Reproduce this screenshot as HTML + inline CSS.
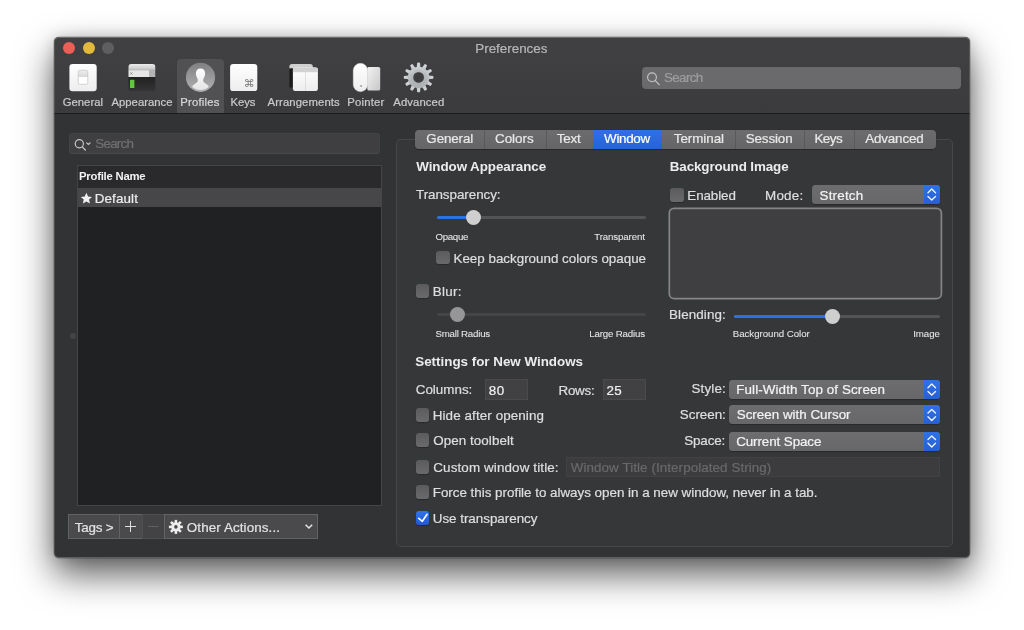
<!DOCTYPE html>
<html lang="en">
<head>
<meta charset="utf-8">
<title>Preferences</title>
<style>
html,body{margin:0;padding:0;background:#fff;}
body{width:1024px;height:630px;position:relative;overflow:hidden;font-family:"Liberation Sans",sans-serif;font-size:13px;}
#g,#txt{position:absolute;left:0;top:0;width:1024px;height:630px;}
#txt,#g svg{will-change:transform;}
.a{position:absolute;}
.x{position:absolute;white-space:nowrap;line-height:1;-webkit-text-stroke:0.22px;}
#w{left:54px;top:37px;width:915.800px;height:520.500px;background:#323335;border-radius:5px;box-shadow:0 0 0 0.5px rgba(0,0,0,.3),0 16px 36px rgba(0,0,0,.65),0 0 14px rgba(0,0,0,.15);}
#tb{left:54px;top:37px;width:915.800px;height:76px;background:linear-gradient(#414144,#3b3b3e);border-radius:5px 5px 0 0;}
.tl{width:12px;height:12px;border-radius:6px;top:42px;}
.cb{width:13.700px;height:13.800px;border-radius:3px;background:linear-gradient(#5b5b5d,#6a6a6c);box-shadow:0 1px 1px rgba(0,0,0,.25);}
.cbon{background:linear-gradient(#3173ea,#2259d2);}
.pop{height:19px;border-radius:3.5px;background:linear-gradient(#6d6d6f,#676769);box-shadow:0 1px 1px rgba(0,0,0,.25);overflow:hidden;}
.pop i{position:absolute;right:0;top:0;width:16px;height:19px;background:linear-gradient(#3071e6,#275fd6);}
.trk{height:3px;border-radius:1.5px;background:#545456;}
.trkd{height:3px;border-radius:1.5px;background:#454547;}
.trkb{height:3px;border-radius:1.5px;background:#2f6fe6;}
.knob{width:15px;height:15px;border-radius:7.5px;background:#cfcfcf;}
.fld{background:#414143;box-sizing:border-box;border:1px solid #4a4a4c;}
.btn{top:514px;height:24.600px;box-sizing:border-box;background:#4a4a4c;border:1px solid #636365;}
.dv{top:130px;width:1px;height:18.5px;background:#59595b;}

</style>
</head>
<body>
<div id="g">
<div id="w" class="a"></div>
<div id="tb" class="a"></div>
<div class="a" style="left:54px;top:113px;width:915.800px;height:1px;background:#1b1b1d;"></div>
<div class="a tl" style="left:63px;background:#ec5f57;"></div>
<div class="a tl" style="left:82.5px;background:#e1b93d;"></div>
<div class="a tl" style="left:102px;background:#5e5e60;"></div>
<div class="a" style="left:177px;top:59px;width:47px;height:54px;background:#515153;border-radius:4px 4px 0 0;"></div>

<!-- toolbar icons -->
<svg class="a" style="left:54px;top:56px;" width="400" height="40" viewBox="54 56 400 40">
<defs>
<linearGradient id="gw" x1="0" y1="0" x2="0" y2="1"><stop offset="0" stop-color="#ffffff"/><stop offset="1" stop-color="#ededed"/></linearGradient>
<linearGradient id="gsw" x1="0" y1="0" x2="0" y2="1"><stop offset="0" stop-color="#f0f0f0"/><stop offset="0.5" stop-color="#d6d6d6"/><stop offset="0.5" stop-color="#ffffff"/><stop offset="1" stop-color="#ffffff"/></linearGradient>
<linearGradient id="gt" x1="0" y1="0" x2="0" y2="1"><stop offset="0" stop-color="#ececec"/><stop offset="1" stop-color="#c4c4c4"/></linearGradient>
<linearGradient id="gd" x1="0" y1="0" x2="0" y2="1"><stop offset="0" stop-color="#222222"/><stop offset="1" stop-color="#343434"/></linearGradient>
<linearGradient id="gp" x1="0" y1="0" x2="0" y2="1"><stop offset="0" stop-color="#808082"/><stop offset="1" stop-color="#b2b2b4"/></linearGradient>
<linearGradient id="gh" x1="0" y1="0" x2="0" y2="1"><stop offset="0" stop-color="#ffffff"/><stop offset="1" stop-color="#e2e2e2"/></linearGradient>
<linearGradient id="gtp" x1="0" y1="0" x2="1" y2="1"><stop offset="0" stop-color="#f4f4f4"/><stop offset="1" stop-color="#c6c6c6"/></linearGradient>
<linearGradient id="gg" x1="0" y1="0" x2="0" y2="1"><stop offset="0" stop-color="#d2d6d8"/><stop offset="1" stop-color="#a4a8aa"/></linearGradient>
<linearGradient id="gg2" gradientUnits="userSpaceOnUse" x1="0" y1="-15" x2="0" y2="15"><stop offset="0" stop-color="#d0d4d6"/><stop offset="1" stop-color="#a6aaac"/></linearGradient>
<clipPath id="cap"><rect x="128.3" y="64" width="27.2" height="27.2" rx="3.2"/></clipPath>
<clipPath id="cpf"><circle cx="200.5" cy="77.3" r="12.700"/></clipPath>
</defs>
<!-- General -->
<rect x="69.4" y="64" width="27.3" height="27.2" rx="3.2" fill="url(#gw)"/>
<rect x="78.2" y="70.3" width="9.6" height="14" rx="1.6" fill="url(#gsw)" stroke="#c2c2c2" stroke-width="0.7"/>
<!-- Appearance -->
<g clip-path="url(#cap)">
<rect x="128.3" y="64" width="27.2" height="6" fill="url(#gt)"/>
<rect x="128.3" y="70" width="20.7" height="7" fill="#e6e6e6"/>
<rect x="149" y="70" width="6.5" height="7" fill="#b4b4b4"/>
<rect x="128.3" y="69.7" width="27.2" height="0.6" fill="#b0b0b0"/>
<path d="M130.3 72.3l2.2 2.4M132.5 72.3l-2.2 2.4" stroke="#777" stroke-width="0.6" fill="none"/>
<rect x="128.3" y="77" width="27.2" height="14.2" fill="url(#gd)"/>
<rect x="130" y="79.8" width="4.4" height="8.2" rx="0.6" fill="#5fc93c"/>
</g>
<!-- Profiles -->
<circle cx="200.5" cy="77.3" r="14.6" fill="url(#gp)"/>
<g clip-path="url(#cpf)">
<path d="M200.500 68.600C203.200 68.600 205.100 70.500 205.100 73.200C205.100 74.500 204.900 75.400 204.600 76.300C204.300 77.300 203.700 78.200 203.400 79.100C203.100 80.100 203.100 81.100 203.500 81.800C204.200 82.900 205.700 83.500 206.900 84.500C208.200 85.500 209.100 86.900 209.500 88.500L209.500 92L191.500 92L191.500 88.500C191.900 86.900 192.800 85.500 194.100 84.500C195.300 83.500 196.800 82.900 197.500 81.800C197.900 81.100 197.900 80.100 197.600 79.100C197.300 78.200 196.700 77.300 196.400 76.300C196.100 75.400 195.900 74.500 195.900 73.200C195.900 70.500 197.800 68.600 200.500 68.600Z" fill="url(#gh)"/>
</g>
<!-- Keys -->
<rect x="230.1" y="64" width="27.2" height="27.1" rx="3.2" fill="url(#gw)"/>
<text x="249.1" y="87.2" font-family="DejaVu Sans, sans-serif" font-size="10.800" fill="#767676" text-anchor="middle">⌘</text>
<!-- Arrangements -->
<path d="M289.4 66.500a2.500 2.500 0 0 1 2.500-2.500h18.400a2.500 2.500 0 0 1 2.500 2.500v2h-23.400z" fill="#cfcfcf"/>
<rect x="289.4" y="68.5" width="4" height="19" fill="#1c1c1c"/>
<rect x="292.9" y="67.5" width="25" height="23.400" rx="2.200" fill="url(#gw)"/>
<path d="M292.900 72.200v-2.500a2.200 2.200 0 0 1 2.200-2.200h20.600a2.200 2.200 0 0 1 2.200 2.200v2.500z" fill="#d2d2d2"/>
<rect x="305.100" y="72.200" width="0.700" height="18.700" fill="#d4d4d4"/>
<!-- Pointer -->
<rect x="367.300" y="66.900" width="12.900" height="23.700" rx="1.600" fill="url(#gtp)"/>
<rect x="353.200" y="63.300" width="14.500" height="28.400" rx="7.200" fill="url(#gw)" stroke="#d0d0d0" stroke-width="0.400"/>
<circle cx="361.100" cy="85.900" r="1" fill="#a0a0a0"/>
<!-- Advanced gear -->
<g transform="translate(418.600 77.400)">
<g fill="url(#gg2)">
<path d="M-1.900 -10l0.500 -4.600q1.400 -0.600 2.800 0l0.500 4.600z" transform="rotate(0)"/>
<path d="M-1.900 -10l0.500 -4.600q1.400 -0.600 2.800 0l0.500 4.600z" transform="rotate(30)"/>
<path d="M-1.900 -10l0.500 -4.600q1.400 -0.600 2.800 0l0.500 4.600z" transform="rotate(60)"/>
<path d="M-1.900 -10l0.500 -4.600q1.400 -0.600 2.800 0l0.500 4.600z" transform="rotate(90)"/>
<path d="M-1.900 -10l0.500 -4.600q1.400 -0.600 2.800 0l0.500 4.600z" transform="rotate(120)"/>
<path d="M-1.900 -10l0.500 -4.600q1.400 -0.600 2.800 0l0.500 4.600z" transform="rotate(150)"/>
<path d="M-1.900 -10l0.500 -4.600q1.400 -0.600 2.800 0l0.500 4.600z" transform="rotate(180)"/>
<path d="M-1.900 -10l0.500 -4.600q1.400 -0.600 2.800 0l0.500 4.600z" transform="rotate(210)"/>
<path d="M-1.900 -10l0.500 -4.600q1.400 -0.600 2.800 0l0.500 4.600z" transform="rotate(240)"/>
<path d="M-1.900 -10l0.500 -4.600q1.400 -0.600 2.800 0l0.500 4.600z" transform="rotate(270)"/>
<path d="M-1.900 -10l0.500 -4.600q1.400 -0.600 2.800 0l0.500 4.600z" transform="rotate(300)"/>
<path d="M-1.900 -10l0.500 -4.600q1.400 -0.600 2.800 0l0.500 4.600z" transform="rotate(330)"/>
</g>
<circle r="8.100" fill="none" stroke="url(#gg2)" stroke-width="5.200"/>
<circle r="7.300" fill="none" stroke="#a2a6a8" stroke-width="0.500"/>
<circle r="5.700" fill="none" stroke="#9a9ea0" stroke-width="0.500"/>
</g>
</svg>

<!-- toolbar search -->
<div class="a" style="left:642px;top:67px;width:319px;height:21.500px;border-radius:4px;background:#6a6a6c;"></div>
<svg class="a" style="left:645px;top:70px;" width="18" height="18" viewBox="645 70 18 18"><circle cx="652" cy="77.300" r="4.400" fill="none" stroke="#c4c4c4" stroke-width="1.150"/><path d="M655.200 80.600l4 4" stroke="#c4c4c4" stroke-width="1.250" stroke-linecap="round"/></svg>

<!-- left: search -->
<div class="a" style="left:68.500px;top:133.200px;width:311.500px;height:20.500px;border-radius:4px;background:#3f3f41;box-shadow:inset 0 -0.500px 0 #505052,inset 0 0 0 0.500px #464648;"></div>
<svg class="a" style="left:72px;top:137px;" width="22" height="16" viewBox="72 137 22 16"><circle cx="79.300" cy="143.800" r="4.100" fill="none" stroke="#c8c8c8" stroke-width="1.200"/><path d="M82.300 146.900l3 3.100" stroke="#c8c8c8" stroke-width="1.300" stroke-linecap="round"/><path d="M86.300 142.600l2.100 1.900l2.100-1.900" fill="none" stroke="#c8c8c8" stroke-width="1.200"/></svg>
<!-- list -->
<div class="a" style="left:77px;top:164.500px;width:304.500px;height:341px;background:#454547;"></div>
<div class="a" style="left:78px;top:165.500px;width:302.500px;height:339px;background:#202123;"></div>
<div class="a" style="left:78px;top:165.500px;width:302.500px;height:22px;background:#2a2a2c;"></div>
<div class="a" style="left:78px;top:187.500px;width:302.500px;height:19.500px;background:#474749;"></div>
<svg class="a" style="left:80px;top:192px;" width="13" height="13" viewBox="0 0 13 13"><path d="M6.400 0.800l1.650 3.700l3.950 0.400l-2.950 2.650l0.850 3.900l-3.500-2l-3.500 2l0.850-3.900l-2.950-2.650l3.950-0.400z" fill="#f0f0f0"/></svg>
<div class="a" style="left:69.500px;top:332.500px;width:6px;height:6px;border-radius:3px;background:#454547;"></div>
<!-- bottom buttons -->
<div class="a btn" style="left:68px;width:52px;"></div>
<div class="a btn" style="left:119px;width:24px;"></div>
<div class="a btn" style="left:142px;width:23px;background:#434345;border-color:#4f4f51;"></div>
<div class="a btn" style="left:164px;width:154px;"></div>
<svg class="a" style="left:119px;top:514px;" width="200" height="24" viewBox="119 514 200 24">
<path d="M130.500 521v11M125 526.500h11" stroke="#dedede" stroke-width="1"/>
<path d="M148 526.500h10.600" stroke="#606062" stroke-width="1"/>
<g transform="translate(175.900 526.900)" fill="#ececec">
<rect x="-1.300" y="-7" width="2.600" height="14"/>
<rect x="-1.300" y="-7" width="2.600" height="14" transform="rotate(45)"/>
<rect x="-1.300" y="-7" width="2.600" height="14" transform="rotate(90)"/>
<rect x="-1.300" y="-7" width="2.600" height="14" transform="rotate(135)"/>
<circle r="4.700"/>
<circle r="1.800" fill="#4a4a4c"/>
</g>
<path d="M305.600 524.800l3.300 3.200l3.300-3.200" fill="none" stroke="#e4e4e4" stroke-width="1.500"/>
</svg>

<!-- right pane -->
<div class="a" style="left:396px;top:139px;width:557.200px;height:408.300px;border-radius:5px;background:#464749;"></div>
<div class="a" style="left:397px;top:140px;width:555.200px;height:406.300px;border-radius:4px;background:#363739;"></div>
<div class="a" style="left:415px;top:130px;width:520.500px;height:18.500px;border-radius:4px;background:linear-gradient(#6c6c6e,#656567);overflow:hidden;box-shadow:0 0.500px 1px rgba(0,0,0,.3);">
  <div class="a" style="left:177.700px;top:0;width:69.800px;height:18.500px;background:linear-gradient(#2f70e6,#2762d8);"></div>
</div>
<div class="a dv" style="left:484.200px;"></div>
<div class="a dv" style="left:545.500px;"></div>
<div class="a dv" style="left:734.900px;"></div>
<div class="a dv" style="left:804px;"></div>
<div class="a dv" style="left:853.700px;"></div>

<!-- sliders -->
<div class="a trk" style="left:437px;top:216px;width:208.800px;"></div>
<div class="a trkb" style="left:437px;top:216px;width:36px;"></div>
<div class="a knob" style="left:465.700px;top:210.100px;"></div>
<div class="a trkd" style="left:437px;top:312.500px;width:208.800px;"></div>
<div class="a knob" style="left:449.500px;top:306.500px;background:#969698;"></div>
<div class="a trk" style="left:734px;top:315.400px;width:205.800px;"></div>
<div class="a trkb" style="left:734px;top:315.400px;width:98px;"></div>
<div class="a knob" style="left:824.500px;top:309.400px;"></div>

<!-- checkboxes -->
<div class="a cb" style="left:436px;top:250.500px;"></div>
<div class="a cb" style="left:415.500px;top:284px;"></div>
<div class="a cb" style="left:415.500px;top:408px;"></div>
<div class="a cb" style="left:415.500px;top:433px;"></div>
<div class="a cb" style="left:415.500px;top:460px;"></div>
<div class="a cb" style="left:415.500px;top:485.300px;"></div>
<div class="a cb cbon" style="left:415.500px;top:511px;"></div>
<svg class="a" style="left:415.500px;top:511px;" width="14" height="14" viewBox="0 0 14 14"><path d="M2.800 7.300l3.500 3l4.800-7" fill="none" stroke="#fff" stroke-width="1.600" stroke-linecap="round" stroke-linejoin="round"/></svg>
<div class="a cb" style="left:670px;top:187.800px;"></div>

<!-- fields -->
<div class="a fld" style="left:484.500px;top:378.800px;width:43.800px;height:21.200px;"></div>
<div class="a fld" style="left:602.500px;top:378.800px;width:43.800px;height:21.200px;"></div>
<div class="a fld" style="left:566.300px;top:456.500px;width:374.200px;height:20.500px;background:#3c3c3e;border-color:#424244;"></div>

<!-- image well -->
<svg class="a" style="left:666px;top:205px;" width="280" height="98" viewBox="666 205 280 98"><rect x="669.300" y="208.300" width="272.100" height="90.300" rx="4.800" fill="#3f3f41" stroke="#858587" stroke-width="1.700"/></svg>

<!-- popups -->
<div class="a pop" style="left:811.700px;top:185px;width:128px;"><i></i></div>
<div class="a pop" style="left:729.400px;top:380px;width:210.300px;"><i></i></div>
<div class="a pop" style="left:729.400px;top:405.300px;width:210.300px;"><i></i></div>
<div class="a pop" style="left:728.500px;top:431.800px;width:211.200px;"><i></i></div>
<svg class="a" style="left:923px;top:180px;" width="18" height="275" viewBox="923 180 18 275">
<g fill="none" stroke="#eef2fc" stroke-width="1.400" stroke-linecap="round" stroke-linejoin="round">
<path id="chv" d="M928 192.700l3.750-3.600l3.750 3.600M928 196.500l3.750 3.600l3.750-3.600"/>
<path d="M928 192.700l3.750-3.600l3.750 3.600M928 196.500l3.750 3.600l3.750-3.600" transform="translate(0 195)"/>
<path d="M928 192.700l3.750-3.600l3.750 3.600M928 196.500l3.750 3.600l3.750-3.600" transform="translate(0 220.300)"/>
<path d="M928 192.700l3.750-3.600l3.750 3.600M928 196.500l3.750 3.600l3.750-3.600" transform="translate(0 246.800)"/>
</g>
</svg>

<div class="a" style="left:54px;top:37px;width:915.800px;height:520.500px;border-radius:5px;box-shadow:inset 0 0 0 1px rgba(255,255,255,.13),inset 0 1px 0 rgba(255,255,255,.12),inset 0 -1px 0 rgba(255,255,255,.1);"></div>

</div>
<div id="txt">
<span id="title" class="x" style="left:475.25px;top:42px;font-size:13.4px;color:#b6b6b6;">Preferences</span>
<span id="l1" class="x" style="left:62.75px;top:97px;font-size:11.3px;color:#c9c9c9;">General</span>
<span id="l2" class="x" style="left:111.50px;top:97px;font-size:11.3px;color:#c9c9c9;">Appearance</span>
<span id="l3" class="x" style="left:180.25px;top:97px;font-size:11.3px;color:#d8d8d8;letter-spacing:0.214px;">Profiles</span>
<span id="l4" class="x" style="left:230.50px;top:97px;font-size:11.3px;color:#c9c9c9;letter-spacing:-0.083px;">Keys</span>
<span id="l5" class="x" style="left:267.50px;top:97px;font-size:11.3px;color:#c9c9c9;letter-spacing:0.114px;">Arrangements</span>
<span id="l6" class="x" style="left:347.25px;top:97px;font-size:11.3px;color:#c9c9c9;letter-spacing:0.208px;">Pointer</span>
<span id="l7" class="x" style="left:393.25px;top:97px;font-size:11.3px;color:#c9c9c9;letter-spacing:0.107px;">Advanced</span>
<span id="srch" class="x" style="left:664.00px;top:71px;font-size:13.4px;color:#9d9d9f;letter-spacing:-0.650px;">Search</span>
<span id="srch2" class="x" style="left:95.25px;top:137px;font-size:13.4px;color:#707072;letter-spacing:-0.750px;">Search</span>
<span id="pn" class="x" style="left:79.00px;top:171px;font-size:11.3px;color:#f2f2f2;font-weight:bold;-webkit-text-stroke:0;letter-spacing:-0.227px;">Profile Name</span>
<span id="def" class="x" style="left:94.75px;top:192px;font-size:13.4px;color:#ececec;letter-spacing:0.125px;">Default</span>
<span id="b1" class="x" style="left:74.75px;top:521px;font-size:13.4px;color:#e2e2e2;letter-spacing:-0.180px;">Tags &gt;</span>
<span id="b4" class="x" style="left:186.80px;top:521px;font-size:13.4px;color:#e2e2e2;letter-spacing:0.107px;">Other Actions...</span>
<span id="g1" class="x" style="left:426.35px;top:132px;font-size:13.4px;color:#e8e8e8;letter-spacing:-0.133px;">General</span>
<span id="g2" class="x" style="left:495.00px;top:132px;font-size:13.4px;color:#e8e8e8;letter-spacing:-0.020px;">Colors</span>
<span id="g3" class="x" style="left:556.75px;top:132px;font-size:13.4px;color:#e8e8e8;letter-spacing:-0.217px;">Text</span>
<span id="g4" class="x" style="left:604.10px;top:132px;font-size:13.4px;color:#ffffff;letter-spacing:-0.320px;">Window</span>
<span id="g5" class="x" style="left:673.75px;top:132px;font-size:13.4px;color:#e8e8e8;letter-spacing:-0.050px;">Terminal</span>
<span id="g6" class="x" style="left:745.65px;top:132px;font-size:13.4px;color:#e8e8e8;letter-spacing:-0.108px;">Session</span>
<span id="g7" class="x" style="left:814.45px;top:132px;font-size:13.4px;color:#e8e8e8;letter-spacing:-0.517px;">Keys</span>
<span id="g8" class="x" style="left:865.15px;top:132px;font-size:13.4px;color:#e8e8e8;letter-spacing:-0.143px;">Advanced</span>
<span id="h1" class="x" style="left:416.25px;top:160px;font-size:13.4px;color:#ececec;font-weight:bold;-webkit-text-stroke:0;letter-spacing:-0.078px;">Window Appearance</span>
<span id="h2" class="x" style="left:669.80px;top:160px;font-size:13.4px;color:#ececec;font-weight:bold;-webkit-text-stroke:0;letter-spacing:-0.117px;">Background Image</span>
<span id="h3" class="x" style="left:415.25px;top:355px;font-size:13.4px;color:#ececec;font-weight:bold;-webkit-text-stroke:0;letter-spacing:-0.011px;">Settings for New Windows</span>
<span id="t1" class="x" style="left:416.00px;top:188px;font-size:13.4px;color:#dedede;letter-spacing:-0.042px;">Transparency:</span>
<span id="s1" class="x" style="left:435.40px;top:232px;font-size:9.7px;color:#e4e4e4;-webkit-text-stroke:0.08px;letter-spacing:-0.280px;">Opaque</span>
<span id="s2" class="x" style="left:594.25px;top:232px;font-size:9.7px;color:#e4e4e4;-webkit-text-stroke:0.08px;letter-spacing:-0.125px;">Transparent</span>
<span id="t2" class="x" style="left:453.50px;top:252px;font-size:13.4px;color:#dedede;letter-spacing:-0.009px;">Keep background colors opaque</span>
<span id="t3" class="x" style="left:432.75px;top:285px;font-size:13.4px;color:#dedede;letter-spacing:0.312px;">Blur:</span>
<span id="s3" class="x" style="left:435.40px;top:329px;font-size:9.7px;color:#e4e4e4;-webkit-text-stroke:0.08px;letter-spacing:-0.209px;">Small Radius</span>
<span id="s4" class="x" style="left:589.25px;top:329px;font-size:9.7px;color:#e4e4e4;-webkit-text-stroke:0.08px;letter-spacing:-0.159px;">Large Radius</span>
<span id="t4" class="x" style="left:415.75px;top:383px;font-size:13.4px;color:#dedede;">Columns:</span>
<span id="t5" class="x" style="left:488.75px;top:384px;font-size:13.4px;color:#f0f0f0;letter-spacing:0.500px;">80</span>
<span id="t6" class="x" style="left:558.50px;top:384px;font-size:13.4px;color:#dedede;letter-spacing:-0.250px;">Rows:</span>
<span id="t7" class="x" style="left:606.50px;top:384px;font-size:13.4px;color:#f0f0f0;letter-spacing:0.250px;">25</span>
<span id="t8" class="x" style="left:432.75px;top:409px;font-size:13.4px;color:#dedede;letter-spacing:0.103px;">Hide after opening</span>
<span id="t9" class="x" style="left:433.25px;top:434px;font-size:13.4px;color:#dedede;letter-spacing:0.062px;">Open toolbelt</span>
<span id="t10" class="x" style="left:433.25px;top:461px;font-size:13.4px;color:#dedede;letter-spacing:0.132px;">Custom window title:</span>
<span id="t11" class="x" style="left:570.75px;top:461px;font-size:13.4px;color:#69696b;letter-spacing:0.079px;">Window Title (Interpolated String)</span>
<span id="t12" class="x" style="left:432.75px;top:486px;font-size:13.4px;color:#dedede;letter-spacing:-0.013px;">Force this profile to always open in a new window, never in a tab.</span>
<span id="t13" class="x" style="left:432.75px;top:512px;font-size:13.4px;color:#dedede;letter-spacing:-0.017px;">Use transparency</span>
<span id="u1" class="x" style="left:687.30px;top:189px;font-size:13.4px;color:#dedede;letter-spacing:-0.100px;">Enabled</span>
<span id="u2" class="x" style="left:765.00px;top:189px;font-size:13.4px;color:#dedede;letter-spacing:0.250px;">Mode:</span>
<span id="p1" class="x" style="left:819.50px;top:189px;font-size:13.4px;color:#f2f2f2;letter-spacing:0.208px;">Stretch</span>
<span id="u3" class="x" style="left:669.00px;top:308px;font-size:13.4px;color:#dedede;letter-spacing:0.125px;">Blending:</span>
<span id="s5" class="x" style="left:732.75px;top:329px;font-size:9.7px;color:#e4e4e4;-webkit-text-stroke:0.08px;letter-spacing:-0.033px;">Background Color</span>
<span id="s6" class="x" style="left:913.20px;top:329px;font-size:9.7px;color:#e4e4e4;-webkit-text-stroke:0.08px;letter-spacing:-0.037px;">Image</span>
<span id="u4" class="x" style="left:691.50px;top:382px;font-size:13.4px;color:#dedede;letter-spacing:0.150px;">Style:</span>
<span id="p2" class="x" style="left:736.25px;top:383px;font-size:13.4px;color:#f2f2f2;letter-spacing:0.100px;">Full-Width Top of Screen</span>
<span id="u5" class="x" style="left:679.85px;top:408px;font-size:13.4px;color:#dedede;letter-spacing:-0.033px;">Screen:</span>
<span id="p3" class="x" style="left:736.75px;top:408px;font-size:13.4px;color:#f2f2f2;letter-spacing:-0.003px;">Screen with Cursor</span>
<span id="u6" class="x" style="left:684.25px;top:434px;font-size:13.4px;color:#dedede;letter-spacing:-0.140px;">Space:</span>
<span id="p4" class="x" style="left:736.15px;top:435px;font-size:13.4px;color:#f2f2f2;letter-spacing:-0.088px;">Current Space</span>
</div>
</body>
</html>
